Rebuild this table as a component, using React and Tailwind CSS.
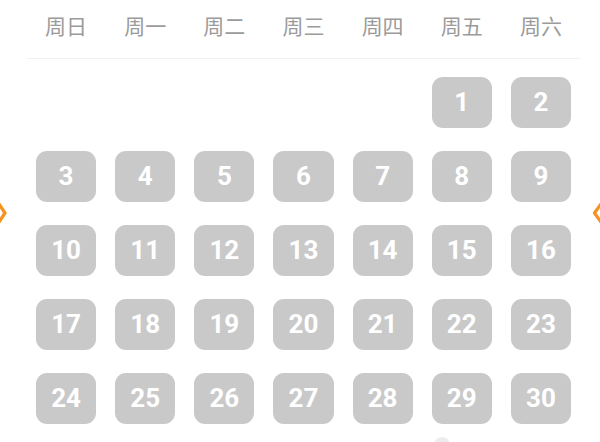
import React from 'react';

const weekdays = ['周日', '周一', '周二', '周三', '周四', '周五', '周六'];

// June-style month: starts on Friday, 30 days
const days = [
  ...Array(5).fill(null),
  ...Array.from({ length: 30 }, (_, i) => i + 1),
];

export default function App() {
  return (
    <div className="relative w-[600px] h-[442px] overflow-hidden bg-white font-['Roboto','Noto_Sans_CJK_SC',sans-serif]">
      {/* Weekday header */}
      <div className="ml-[36px] w-[535px] grid grid-cols-7 gap-x-[19px] pt-[13px]">
        {weekdays.map((d) => (
          <div
            key={d}
            className="text-center text-[21px] leading-[24px] text-[#9b9b9b] font-['Noto_Sans_CJK_SC',sans-serif]"
          >
            {d}
          </div>
        ))}
      </div>

      <div className="ml-[27px] mr-[20px] mt-[21px] h-px bg-[#f0f0f0]" />

      {/* Day grid */}
      <div className="ml-[36px] mt-[18px] w-[535px] grid grid-cols-7 gap-x-[19px] gap-y-[23px]">
        {days.map((day, i) =>
          day ? (
            <div
              key={i}
              className="h-[51px] rounded-[11px] bg-[#c9c9c9] flex items-center justify-center text-white text-[26px] font-bold"
            >
              {day}
            </div>
          ) : (
            <div key={i} className="h-[51px]" />
          )
        )}
      </div>

      {/* Month switch arrows, cut by the edges */}
      <svg className="absolute left-0 top-[201px]" width="8" height="24" viewBox="0 0 8 24">
        <path d="M-1 3 L5 12 L-1 21" fill="none" stroke="#f7921e" strokeWidth="3.2" strokeLinecap="round" strokeLinejoin="round" />
      </svg>
      <svg className="absolute right-0 top-[201px]" width="9" height="24" viewBox="0 0 9 24">
        <path d="M10 3 L3.5 12 L10 21" fill="none" stroke="#f7921e" strokeWidth="3.2" strokeLinecap="round" strokeLinejoin="round" />
      </svg>

      {/* faint dot peeking at the bottom */}
      <div className="absolute left-[434px] top-[437px] w-[16px] h-[16px] rounded-full bg-[#ececec]" />
    </div>
  );
}
